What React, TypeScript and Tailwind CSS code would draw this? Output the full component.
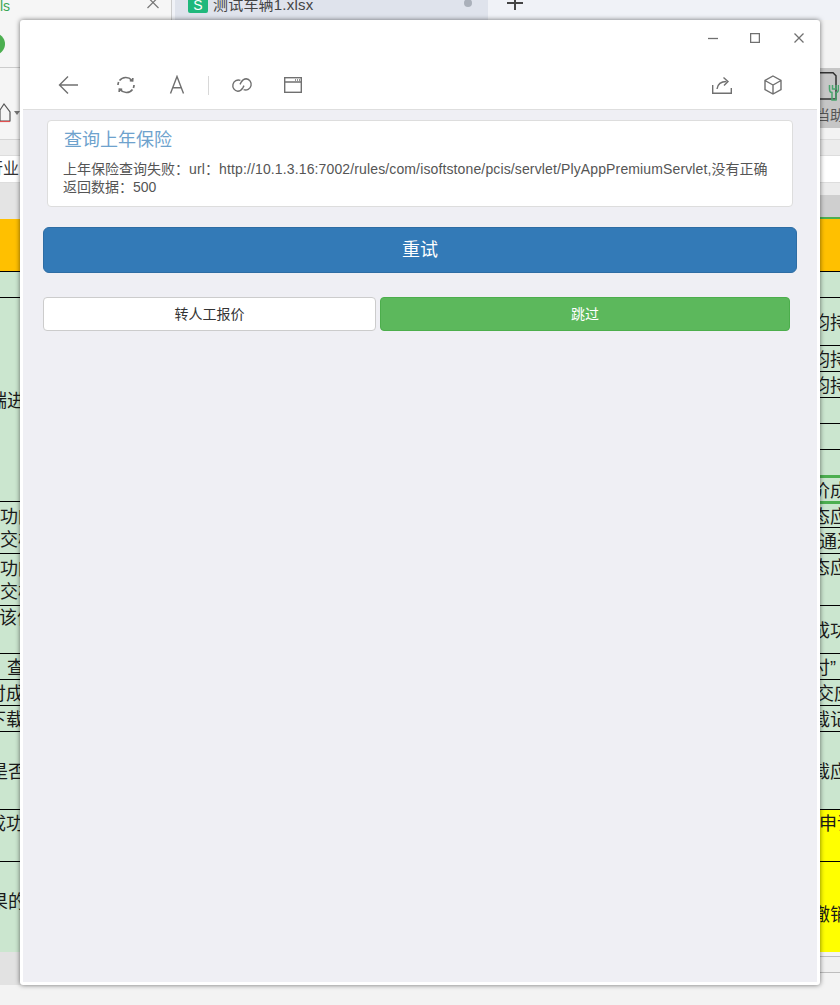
const font = "font-['Liberation_Sans','Noto_Sans_CJK_SC',sans-serif]";

type Cell = { box: string; text?: string; inner?: string };

const leftCells: Cell[] = [
  { box: "h-[53px] bg-[#ffc000] border-b border-black" },
  { box: "h-[26px] border-b border-black" },
  { box: "h-[204px] border-b border-black", text: "端进", inner: "ml-[-11px]" },
  { box: "h-[52px] border-b border-black", text: "功的\n交校", inner: "ml-[0px]" },
  { box: "h-[52px] border-b border-black", text: "功的\n交校", inner: "ml-[0px]" },
  { box: "h-[48px] border-b border-black", text: "该信", inner: "ml-[-1px] mb-[26px]" },
  { box: "h-[26px] border-b border-black", text: "查", inner: "ml-[7px]" },
  { box: "h-[26px] border-b border-black", text: "付成", inner: "ml-[-12px]" },
  { box: "h-[26px] border-b border-black", text: "下载", inner: "ml-[-12px]" },
  { box: "h-[78px] border-b border-black", text: "是否", inner: "ml-[-10px]" },
  { box: "h-[52px] border-b border-black", text: "成功", inner: "ml-[-12px] mb-[26px]" },
  { box: "h-[90px]", text: "果的", inner: "ml-[-10px] mb-[12px]" },
];

const rightCells: Cell[] = [
  { box: "h-[53px] bg-[#ffc000] border-b border-black" },
  { box: "h-[26px] border-b border-black" },
  { box: "h-[48px] border-b border-black", text: "均持", inner: "ml-[392px]" },
  { box: "h-[26px] border-b border-black", text: "均持", inner: "ml-[392px]" },
  { box: "h-[26px] border-b border-black", text: "均持", inner: "ml-[392px]" },
  { box: "h-[26px] border-b border-black" },
  { box: "h-[26px] border-b border-black" },
  { box: "h-[28px] border-b-[3px] border-[#4caf50]" },
  { box: "h-[26px] border-b-[3px] border-[#4caf50]", text: "价成", inner: "ml-[392px]" },
  { box: "h-[24px] border-b border-black", text: "态应", inner: "ml-[392px]" },
  { box: "h-[26px] border-b border-black", text: "通过", inner: "ml-[399px]" },
  { box: "h-[52px] border-b border-black", text: "态应", inner: "ml-[392px] mb-[26px]" },
  { box: "h-[48px] border-b border-black", text: "成功", inner: "ml-[392px]" },
  { box: "h-[26px] border-b border-black", text: "付”", inner: "ml-[392px]" },
  { box: "h-[26px] border-b border-black", text: "交应", inner: "ml-[396px]" },
  { box: "h-[26px] border-b border-black", text: "载记", inner: "ml-[392px]" },
  { box: "h-[78px] border-b border-black", text: "载应", inner: "ml-[392px]" },
  { box: "h-[52px] bg-[#ffff00] border-b border-black", text: "申请", inner: "ml-[399px] mb-[26px]" },
  { box: "h-[90px] bg-[#ffff00]", text: "撤销", inner: "ml-[392px] mt-[14px]" },
];

function Sheet({ cells }: { cells: Cell[] }) {
  return (
    <div className="bg-[#cbe6cf] flex flex-col">
      {cells.map((c, i) => (
        <div key={i} className={`flex items-center overflow-hidden pt-[3px] ${c.box}`}>
          {c.text && (
            <div className={`whitespace-pre text-[18px] leading-[23px] text-[#1a1a1a] ${c.inner}`}>{c.text}</div>
          )}
        </div>
      ))}
    </div>
  );
}

const stroke = { fill: "none", stroke: "#707070", strokeWidth: 1.4 };

function Toolbar() {
  return (
    <div className="flex h-[44px] items-center border-b border-[#dedede] pb-[5px] pl-[35px] pr-[35px]">
      <svg width="20" height="20" viewBox="0 0 20 20" {...stroke}>
        <path d="M20 10H1.500M10 1.500 1.500 10l8.500 8.500" />
      </svg>
      <svg width="20" height="20" viewBox="0 0 20 20" className="ml-[38px]" {...stroke} strokeWidth={1.7}>
        <path d="M15.800 5.200A8 8 0 0 0 3.500 5.600M4.200 14.800a8 8 0 0 0 12.300-.4M2 10c0-1 .2-2 .6-3M18 10c0 1-.2 2-.6 3" />
        <path d="m13.800 5.600 2.800.2.200-2.800M6.200 14.400l-2.800-.2-.2 2.800" />
      </svg>
      <svg width="16" height="20" viewBox="0 0 16 20" className="ml-[33px]" {...stroke}>
        <path d="M1.500 18.500 8 1.500l6.500 17M3.600 12.800h8.800" />
      </svg>
      <div className="ml-[23px] h-[19px] w-px bg-[#d8d8d8]" />
      <svg width="22" height="16" viewBox="0 0 22 16" className="ml-[22px]" {...stroke}>
        <path d="M9.400 3.400A5.600 5.600 0 1 0 6.800 14.200c2.600 0 3.800-1.400 5-3.400l1.200-2.200" />
        <path d="M12.600 12.600A5.600 5.600 0 1 0 15.200 1.800c-2.600 0-3.800 1.400-5 3.400L9 7.400" />
      </svg>
      <svg width="18" height="16" viewBox="0 0 18 16" className="ml-[31px]" {...stroke}>
        <rect x="0.700" y="0.700" width="16.600" height="14.600" />
        <path d="M1 5h16M11 3h1M13 3h1M15 3h1" />
      </svg>
      <svg width="20" height="18" viewBox="0 0 20 18" className="ml-auto" {...stroke}>
        <path d="M.7 9v8.300h18.600V12M5 13c.6-4.500 3.500-7.500 9.500-7.500" />
        <path d="M11.500 1.500 16 5.500l-4 4" />
      </svg>
      <svg width="18" height="20" viewBox="0 0 18 20" className="ml-[32px] mr-[0px]" {...stroke}>
        <path d="M9 1 17 5.500v9L9 19l-8-4.500v-9zM1 5.500 9 10l8-4.500M9 10v9" />
      </svg>
    </div>
  );
}

function App() {
  return (
    <div className={`relative h-[1005px] w-[840px] overflow-hidden bg-[#f3f3f3] ${font}`}>
      <div className="flex h-[20px] overflow-hidden bg-[#f0f2f7]">
        <div className="relative flex h-[20px] w-[172px] justify-between border-r border-[#cccccc] bg-[#f6f6f6]">
          <span className="mt-[-4px] text-[14px] leading-[20px] text-[#3aa655]">ls</span>
          <svg width="14" height="12" viewBox="0 0 14 12" className="mr-[11px] mt-[-3px]" fill="none" stroke="#777" strokeWidth="1.200">
            <path d="m1.500 0 11 11M12.500 0l-11 11" />
          </svg>
        </div>
        <div className="ml-[3px] flex h-[20px] w-[313px] items-start bg-[#dfe3ec] pl-[13px]">
          <div className="flex h-[13px] w-[20px] items-end justify-center rounded-b-[2px] bg-[#1fb87c] pb-[1px] text-[14px] leading-[14px] text-white">S</div>
          <span className="ml-[5px] mt-[-5px] text-[15px] leading-[20px] tracking-[0.2px] text-[#444]">测试车辆1.xlsx</span>
          <span className="ml-auto mr-[16px] mt-[-1px] h-[8px] w-[8px] rounded-full bg-[#aab0ba]" />
        </div>
        <svg width="16" height="10" viewBox="0 0 16 10" className="ml-[19px]" fill="none" stroke="#444" strokeWidth="2">
          <path d="M8 0v10M0 3h16" />
        </svg>
      </div>

      <div className="flex">
        <div className="flex w-[420px] flex-col">
          <div className="relative flex h-[48px] items-center overflow-hidden border-b border-[#cccccc] bg-[#f5f5f5]">
            <div className="ml-[-17px] h-[22px] w-[22px] rounded-full bg-[#4caf50]" />
          </div>
          <div className="flex h-[72px] items-start border-b border-[#d5d5d5] bg-[#f5f5f5] pt-[33px]">
            <svg width="22" height="22" viewBox="0 0 22 22" fill="none" stroke="#555" strokeWidth="1.200">
              <path d="M0 9 4 3l6 8v9H0z" />
              <path d="M0 20.500h10" stroke="#e05050" />
              <path d="M14 10h6l-3 4z" fill="#777" stroke="none" />
            </svg>
          </div>
          <div className="h-[15px] bg-[#ececec]" />
          <div className="flex h-[28px] items-center border-y border-[#dddddd] bg-white text-[16px] leading-[20px] text-[#333]">
            <span className="ml-[-13px]">行业</span>
          </div>
          <div className="h-[36px] bg-[#e4e4e4]" />
          <Sheet cells={leftCells} />
          <div className="h-[33px] bg-[#e2e2e2]" />
        </div>
        <div className="flex w-[420px] flex-col">
          <div className="h-[48px] bg-[#f3f3f3]" />
          <div className="flex h-[60px] flex-col items-start bg-[#c6c6c6] pl-[399px] pt-[4px] text-[14px] leading-[20px] text-[#555]">
            <svg width="20" height="30" viewBox="0 0 20 30" fill="none" strokeWidth="1.500" className="mb-[2px]">
              <path d="M0 .7h14l3 3V27H0" stroke="#333" />
              <path d="M10.500 13v4c0 2.500 1.500 3.500 2.500 3.500V28h4v-7.500c1 0 2.500-1 2.500-3.500v-4M13.500 13v4h3.500v-4" stroke="#4aa56e" />
            </svg>
            <span className="ml-[-3px] mt-[1px] whitespace-nowrap">当助</span>
          </div>
          <div className="h-[12px] border-b border-[#dddddd] bg-[#f3f3f3]" />
          <div className="h-[15px] bg-[#ececec]" />
          <div className="h-[28px] border-y border-[#dddddd] bg-white" />
          <div className="h-[12px] bg-[#ececec]" />
          <div className="h-[24px] border-b-2 border-[#4caf50] bg-[#cfcfcf]" />
          <Sheet cells={rightCells} />
          <div className="h-[5px] border-b border-[#bdbdbd] bg-[#f3f3f3]" />
          <div className="h-[16px] border-b border-[#bdbdbd] bg-[#f0f0f0]" />
        </div>
      </div>

      <div className="absolute left-[20px] top-[20px] flex h-[965px] w-[800px] flex-col rounded-[3px] bg-white px-[3px] pb-[3px] shadow-[0_0_5px_rgba(0,0,0,0.55)]">
        <div className="flex h-[46px] items-start">
          <div className="ml-auto flex h-[36px] items-center pr-[13px]">
            <svg width="10" height="10" viewBox="0 0 10 10" fill="none" stroke="#707070" strokeWidth="1.300">
              <path d="M0 5.500h10" />
            </svg>
            <svg width="10" height="10" viewBox="0 0 10 10" className="ml-[32px]" fill="none" stroke="#707070" strokeWidth="1.300">
              <rect x=".6" y=".6" width="8.800" height="8.800" />
            </svg>
            <svg width="10" height="10" viewBox="0 0 10 10" className="ml-[34px]" fill="none" stroke="#707070" strokeWidth="1.300">
              <path d="m.5.500 9 9M9.500.500l-9 9" />
            </svg>
          </div>
        </div>
        <Toolbar />
        <div className="flex flex-1 flex-col bg-[#efeff4] pt-[10px]">
          <div className="mx-[24px] rounded-[4px] border border-[#dddddd] bg-white px-[15px] pb-[10px]">
            <div className="pl-[1px] pt-[6px] text-[18px] leading-[26px] text-[#6ea2cd]">查询上年保险</div>
            <p className="mt-[7px] text-[14px] leading-[18px] text-[#555555]">
              上年保险查询失败：<span className="tracking-[0.13px]">url：http://10.1.3.16:7002/rules/com/isoftstone/pcis/servlet/PlyAppPremiumServlet,</span>没有正确返回数据：500
            </p>
          </div>
          <button className="mx-[20px] mt-[20px] h-[46px] rounded-[6px] border border-[#2e6da4] bg-[#337ab7] text-[18px] text-white">重试</button>
          <div className="ml-[20px] mt-[24px] flex gap-[4px]">
            <button className="h-[34px] w-[333px] rounded-[4px] border border-[#cccccc] bg-white text-[14px] text-[#333333]">转人工报价</button>
            <button className="h-[34px] w-[410px] rounded-[4px] border border-[#4cae4c] bg-[#5cb85c] text-[14px] text-white">跳过</button>
          </div>
        </div>
      </div>
    </div>
  );
}

export default App;
